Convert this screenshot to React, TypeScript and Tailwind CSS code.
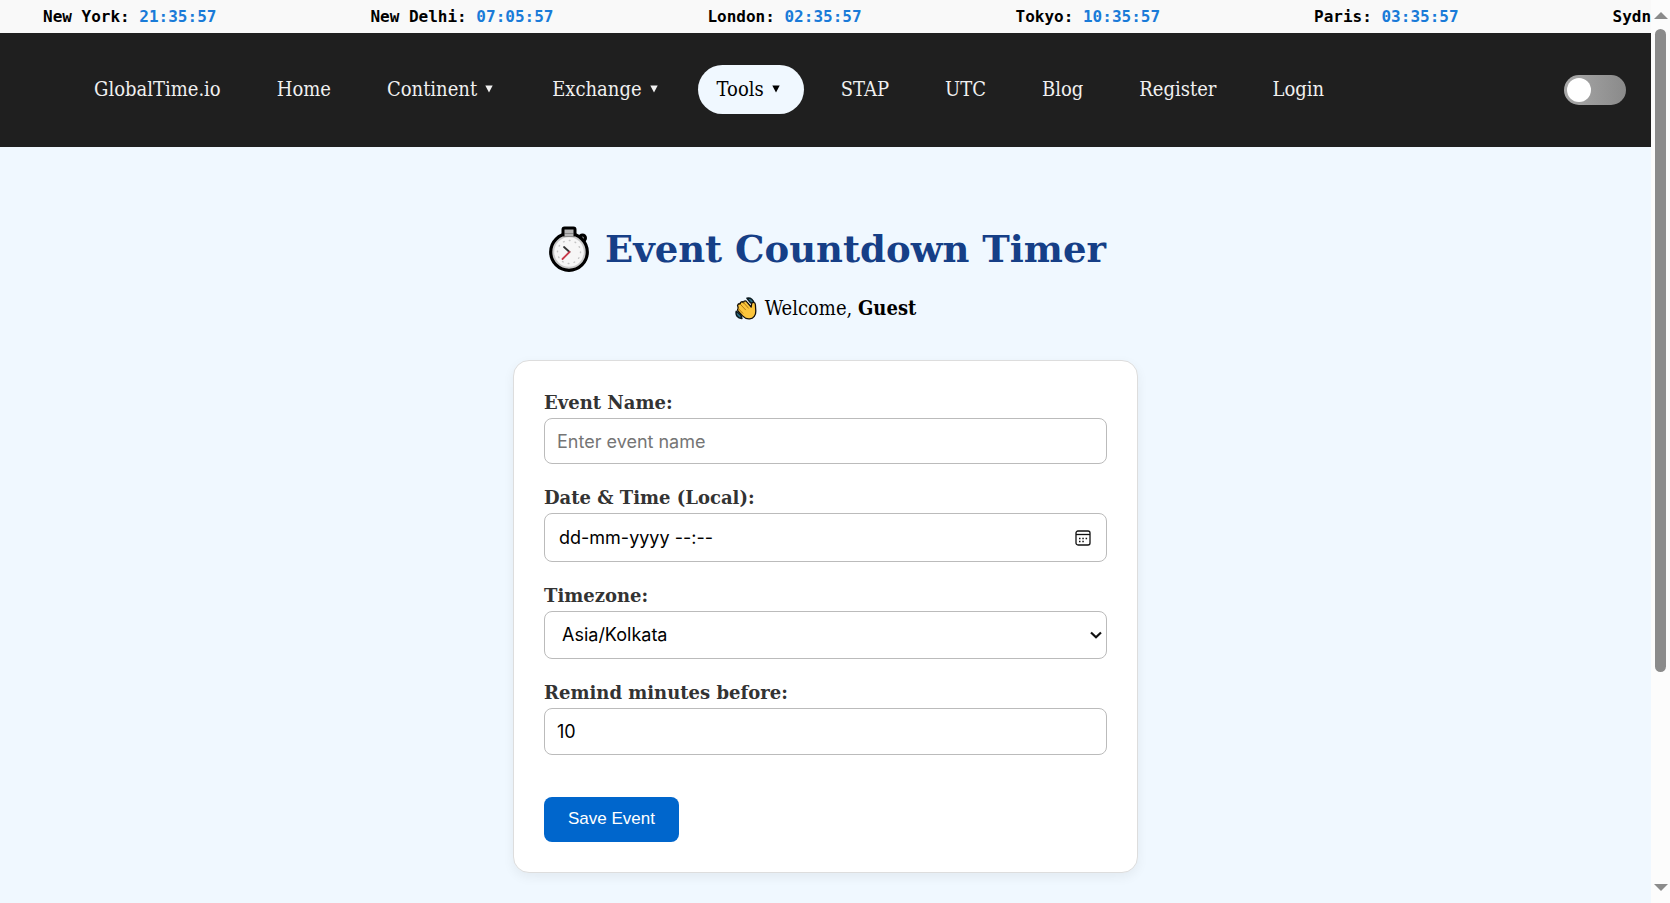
import { useState, type ReactNode } from "react";

const clocks = [
  { city: "New York", time: "21:35:57" },
  { city: "New Delhi", time: "07:05:57" },
  { city: "London", time: "02:35:57" },
  { city: "Tokyo", time: "10:35:57" },
  { city: "Paris", time: "03:35:57" },
  { city: "Sydney", time: "12:35:57" },
];

const links = [
  { label: "GlobalTime.io" },
  { label: "Home" },
  { label: "Continent", menu: true },
  { label: "Exchange", menu: true },
  { label: "Tools", menu: true, active: true },
  { label: "STAP" },
  { label: "UTC" },
  { label: "Blog" },
  { label: "Register" },
  { label: "Login" },
];

function Ticker() {
  return (
    <div className="flex h-[33px] items-center gap-[154px] overflow-hidden bg-[#f9f9f9] pl-[43px] font-['DejaVu_Sans_Mono',monospace] text-base font-bold whitespace-nowrap">
      {clocks.map((c) => (
        <div key={c.city} className="shrink-0">
          {c.city}: <span className="text-[#1a7bd8]">{c.time}</span>
        </div>
      ))}
    </div>
  );
}

function NavBar() {
  const [dark, setDark] = useState(false);
  return (
    <nav className="flex h-[114px] items-center justify-between bg-[#1f1f1f] pr-[25px] pl-[75px]">
      <ul className="flex items-center gap-[18px] pb-[2px] text-xl leading-[25px]">
        {links.map((l) => (
          <li key={l.label} className={l.menu && !l.active ? "pr-[3px]" : ""}>
            <a
              href="#"
              className={
                l.active
                  ? "flex items-center gap-2 rounded-full bg-[#f0f8ff] py-3 pr-6 pl-[19px] text-black"
                  : "flex items-center gap-2 px-[19px] py-3 text-[#f0f0f0]"
              }
            >
              {l.label}
              {l.menu && (
                <svg className="h-2 w-2" viewBox="0 0 8 8" fill="currentColor" aria-hidden="true">
                  <path d="M0.300 0.500h7.400L4 7.500z" />
                </svg>
              )}
            </a>
          </li>
        ))}
      </ul>
      <label className="relative h-[30px] w-[62px] shrink-0 rounded-full bg-linear-to-r from-[#a9a9a9] to-[#8a8a8a]">
        <input
          type="checkbox"
          aria-label="Dark mode"
          checked={dark}
          onChange={(e) => setDark(e.target.checked)}
          className="peer absolute inset-0 cursor-pointer opacity-0"
        />
        <span className="absolute top-[3px] left-[3px] h-6 w-6 rounded-full bg-white peer-checked:left-[35px]" />
      </label>
    </nav>
  );
}

function Stopwatch() {
  return (
    <svg className="h-[46px] w-[40px] shrink-0" viewBox="0 0 40 46" aria-hidden="true">
      <circle cx="33.500" cy="12" r="3" fill="#8f8f8f" stroke="#000" strokeWidth="3" />
      <circle cx="20" cy="26" r="18.3" fill="#c9c9c9" stroke="#000" strokeWidth="3.2" />
      <rect x="14" y="2" width="12" height="7" rx="1.5" fill="#b5b5b5" stroke="#000" strokeWidth="3" />
      <path d="M15.5 7.500h9v3h-9z" fill="#b5b5b5" />
      <circle cx="20" cy="26" r="14.800" fill="#f6f6f6" />
      <circle cx="20" cy="26" r="11.500" fill="none" stroke="#c4c4c4" strokeWidth="1.400" strokeLinecap="round" strokeDasharray="0.700 5.320" />
      <path d="M20.500 26l-5.500-5" stroke="#333" strokeWidth="1.800" fill="none" strokeLinecap="round" />
      <path d="M20.500 26l-7 7" stroke="#c83a4a" strokeWidth="1.800" fill="none" strokeLinecap="round" />
    </svg>
  );
}

function WavingHand() {
  return (
    <svg className="h-[23px] w-[22px] shrink-0" viewBox="0 0 22 23" aria-hidden="true">
      <path d="M12 1.200c3.800-.7 6.600 1.600 7.100 5.600l-3.600-1z" fill="#2f7086" stroke="#0b1a20" strokeWidth="1.500" strokeLinejoin="round" />
      <path d="M1.300 14.200c-1 4 1.400 7 5.600 7.300l-1-3.300z" fill="#2f7086" stroke="#0b1a20" strokeWidth="1.500" strokeLinejoin="round" />
      <path
        d="M3 7.500c.6-.8 1.500-.9 2.300-.3-.2-1 .2-2 1.100-2.300.8-.3 1.600 0 2.100.7.100-1 .8-1.700 1.700-1.700.7 0 1.200.4 1.600.9l4.400 5.200.4-3c.2-1.200 1-1.800 2-1.700 1.300.2 1.800 1.200 1.800 2.400l.4 6.300c.2 4-2.300 7.500-6.100 7.900-2.800.3-5-.8-6.900-2.800l-4.600-4.900c-.8-.9-.8-2 0-2.700L2.900 9.700c-.5-.7-.4-1.600.1-2.200z"
        fill="#fbc53c"
        stroke="#14100a"
        strokeWidth="1.300"
        strokeLinejoin="round"
      />
      <path d="M5.300 7.200l5.200 5.600M8.500 5.600l5 5.600M3.200 11.500l4.600 4.700" stroke="#b37a14" strokeWidth="1" fill="none" strokeLinecap="round" />
    </svg>
  );
}

function Field({ id, label, children }: { id: string; label: string; children: ReactNode }) {
  return (
    <div>
      <label htmlFor={id} className="block h-[27px] font-['DejaVu_Serif',serif] text-lg leading-6 font-bold text-[#333]">
        {label}
      </label>
      {children}
    </div>
  );
}

const box = "block w-full rounded-lg border border-[#bbb] bg-white font-['Inter',sans-serif] text-lg text-black outline-none";

function EventForm() {
  const [zone, setZone] = useState("Asia/Kolkata");
  return (
    <form
      onSubmit={(e) => e.preventDefault()}
      className="w-full max-w-[625px] rounded-2xl border border-[#ddd] bg-white p-[30px] shadow-[0_4px_12px_rgba(0,0,0,0.06)]"
    >
      <div className="flex flex-col gap-[22px]">
        <Field id="event-name" label="Event Name:">
          <input id="event-name" type="text" placeholder="Enter event name" className={`${box} h-[46px] px-3 placeholder:text-[#757575]`} />
        </Field>
        <Field id="event-time" label="Date & Time (Local):">
          <div className="relative">
            <input id="event-time" type="text" placeholder="dd-mm-yyyy --:--" className={`${box} h-[49px] px-[14px] placeholder:text-black`} />
            <button type="button" aria-label="Open calendar" className="absolute top-[17px] right-4">
              <svg className="h-4 w-4" viewBox="0 0 16 16" fill="none" stroke="#111" strokeWidth="1.300" aria-hidden="true">
                <rect x="1" y="1" width="14" height="14" rx="2" />
                <path d="M1 4.500h14" />
                <path d="M4 8.500h1.500M7.300 8.500h1.500M10.600 8.500h1.500M4 11.500h1.500M7.300 11.500h1.500" strokeWidth="1.600" />
              </svg>
            </button>
          </div>
        </Field>
        <Field id="timezone" label="Timezone:">
          <div className="relative">
            <select
              id="timezone"
              value={zone}
              onChange={(e) => setZone(e.target.value)}
              className={`${box} h-12 appearance-none pr-8 pl-[17px]`}
            >
              <option>Asia/Kolkata</option>
              <option>Europe/London</option>
              <option>America/New_York</option>
            </select>
            <svg className="pointer-events-none absolute top-5 right-[5px] h-2 w-3" viewBox="0 0 12 8" fill="none" stroke="#111" strokeWidth="2.200" aria-hidden="true">
              <path d="M1 1.500l5 4.800 5-4.800" />
            </svg>
          </div>
        </Field>
        <Field id="remind" label="Remind minutes before:">
          <input id="remind" type="text" inputMode="numeric" defaultValue="10" className={`${box} h-[47px] px-3`} />
        </Field>
      </div>
      <button type="submit" className="mt-[42px] h-[45px] rounded-lg bg-[#06c] px-6 pb-[2px] font-['Liberation_Sans',sans-serif] text-[17px] text-white">
        Save Event
      </button>
    </form>
  );
}

function ScrollBar() {
  return (
    <div className="flex w-[19px] shrink-0 flex-col items-center bg-[#fcfcfc] pt-3 pb-3" aria-hidden="true">
      <svg className="h-[7px] w-[14px]" viewBox="0 0 14 7" fill="#8b8b8b">
        <path d="M7 0l7 7H0z" />
      </svg>
      <div className="mt-[10px] w-[11px] grow-[642] rounded-full bg-[#8b8b8b]" />
      <div className="grow-[212]" />
      <svg className="h-[7px] w-[14px]" viewBox="0 0 14 7" fill="#8b8b8b">
        <path d="M0 0h14L7 7z" />
      </svg>
    </div>
  );
}

export default function App() {
  return (
    <div className="flex min-h-screen bg-[#f0f8ff] font-['DejaVu_Serif_Condensed','DejaVu_Serif',serif] text-black">
      <div className="flex min-w-0 flex-1 flex-col">
        <Ticker />
        <NavBar />
        <main className="flex flex-col items-center px-6 pt-[72px] pb-[30px]">
          <h1 className="flex items-center gap-4 pl-1 font-['DejaVu_Serif',serif] text-[37px] leading-[60px] font-bold text-[#163f87]">
            <Stopwatch />
            Event Countdown Timer
          </h1>
          <p className="mt-4 mb-[38px] flex items-center gap-2 text-xl leading-[27px]">
            <WavingHand />
            <span>
              Welcome, <strong>Guest</strong>
            </span>
          </p>
          <EventForm />
        </main>
      </div>
      <ScrollBar />
    </div>
  );
}
